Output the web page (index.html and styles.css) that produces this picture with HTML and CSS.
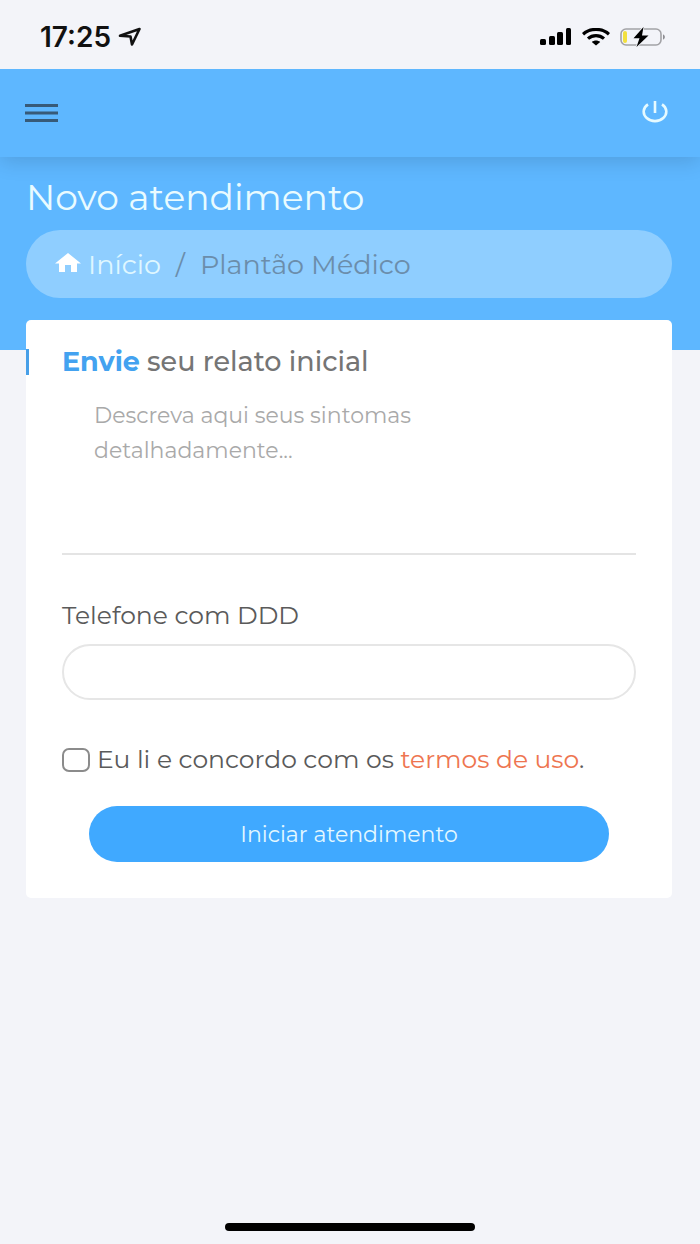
FILE: index.html
```html
<!DOCTYPE html>
<html lang="pt-BR">
<head>
  <meta charset="UTF-8">
  <meta name="viewport" content="width=device-width, initial-scale=1">
  <title>Novo atendimento</title>
  <link rel="stylesheet" href="styles.css">
</head>
<body>
  <div class="status-bar">
    <div class="status-time">
      <span>17:25</span>
      <svg width="24" height="20" viewBox="0 0 24 20" fill="none" stroke="#111" stroke-width="2.6" stroke-linejoin="round">
        <path d="M2 8.8 21.5 2 14 17.5 12.5 9.5Z"/>
      </svg>
    </div>
    <div class="status-icons">
      <svg width="32" height="18" viewBox="0 0 32 18" fill="#000">
        <rect x="0" y="11" width="6" height="6" rx="1.5"/>
        <rect x="9" y="8" width="6" height="9" rx="1.5"/>
        <rect x="17" y="4" width="6" height="13" rx="1.5"/>
        <rect x="26" y="0" width="5" height="17" rx="1.5"/>
      </svg>
      <svg width="28" height="18" viewBox="0 0 28 18" fill="none" stroke="#000" stroke-width="3.2">
        <path d="M1 6.2C8-.2 20-.2 27 6.2"/>
        <path d="M6 10.6C10.5 6.6 17.5 6.6 22 10.6"/>
        <path d="M14 17.5 9.8 14C12 12 16 12 18.2 14Z" fill="#000" stroke="none"/>
      </svg>
      <svg width="46" height="20" viewBox="0 0 46 20">
        <rect x="1" y="2" width="40" height="16" rx="5" fill="none" stroke="#a2a2a6" stroke-width="1.6"/>
        <rect x="3" y="4" width="4" height="12" rx="2" fill="#f3e03f"/>
        <path d="M43 7.5C45.5 8 45.5 12 43 12.5Z" fill="#8e8e93"/>
        <path d="M23.5 0 13.5 11.2H19.5L16.5 20 28.5 8.4H22Z" fill="#000" stroke="#f3f4f9" stroke-width="1.5" paint-order="stroke"/>
      </svg>
    </div>
  </div>

  <header class="navbar">
    <button type="button" class="nav-button" aria-label="Menu">
      <svg width="33" height="20" viewBox="0 0 33 20" stroke="#375a78" stroke-width="3">
        <path d="M0 2.5H33M0 10H33M0 17.5H33"/>
      </svg>
    </button>
    <button type="button" class="nav-button" aria-label="Sair">
      <svg width="26" height="24" viewBox="0 0 26 24" fill="none" stroke="#e6faff" stroke-width="2.6">
        <path d="M6 3.3A11.3 9.4 0 1 0 20 3.3"/>
        <path d="M13 0V12"/>
      </svg>
    </button>
  </header>

  <section class="page-header">
    <h1>Novo atendimento</h1>
    <nav class="breadcrumb" aria-label="Navegação">
      <a href="#">
        <svg width="26" height="22" viewBox="0 0 26 22" fill="#fff">
          <path d="M13 0 26 10.5H22V19H16V12H10V19H4V10.5H0Z"/>
        </svg>
        <span>Início</span>
      </a>
      <span class="separator">/</span>
      <span class="current">Plantão Médico</span>
    </nav>
  </section>

  <main class="card">
    <h2 class="card-title"><label for="relato"><strong>Envie</strong> seu relato inicial</label></h2>
    <form class="card-form">
      <textarea id="relato" name="relato" placeholder="Descreva aqui seus sintomas detalhadamente..."></textarea>

      <label class="phone-label" for="telefone">Telefone com DDD</label>
      <input class="phone" type="tel" id="telefone" name="telefone">

      <div class="terms">
        <input type="checkbox" id="termos" name="termos">
        <label for="termos">Eu li e concordo com os <a href="#">termos de uso</a>.</label>
      </div>

      <button type="submit" class="submit">Iniciar atendimento</button>
    </form>
  </main>

  <div class="home-indicator"></div>
</body>
</html>
```

FILE: styles.css
```css
* {
  box-sizing: border-box;
}

body {
  margin: 0;
  min-height: 100vh;
  display: flex;
  flex-direction: column;
  background-color: #f3f4f9;
  color: #5a5a5a;
  font-family: Montserrat, "DejaVu Sans", Verdana, sans-serif;
  font-size: 25px;
}

h1,
h2 {
  margin: 0;
  font-weight: normal;
}

a {
  text-decoration: none;
}

svg {
  display: block;
}

.status-bar {
  display: flex;
  justify-content: space-between;
  align-items: center;
  height: 69px;
  padding: 4px 34px 0 40px;
}

.status-time {
  display: flex;
  align-items: center;
  gap: 7px;
  color: #111;
  font-family: Inter, sans-serif;
  font-size: 28px;
  font-weight: 600;
}

.status-icons {
  display: flex;
  align-items: center;
  gap: 10px;
}

.navbar {
  position: relative;
  display: flex;
  justify-content: space-between;
  align-items: center;
  height: 88px;
  padding: 0 32px 0 25px;
  background-color: #5eb7ff;
  box-shadow: 0 4px 20px rgba(0, 0, 0, 0.14);
  clip-path: inset(0 0 -32px 0);
}

.nav-button {
  padding: 0;
  border: none;
  background: none;
  cursor: pointer;
}

.page-header {
  padding: 20px 28px 52px 26px;
  background-color: #5eb7ff;
}

.page-header h1 {
  color: #e9fbff;
  font-size: 36px;
  line-height: 40px;
  margin-bottom: 13px;
}

.breadcrumb {
  display: flex;
  align-items: center;
  gap: 15px;
  height: 68px;
  padding: 0 29px;
  border-radius: 34px;
  background-color: #8fceff;
  color: #6b8dab;
  font-size: 27px;
}

.breadcrumb a {
  display: flex;
  align-items: center;
  gap: 7px;
  color: #dff7ff;
}

.card {
  position: relative;
  margin: -30px 28px 0 26px;
  padding: 29px 0 36px;
  border-radius: 5px;
  background-color: #fff;
}

.card-title {
  padding-left: 33px;
  border-left: 3px solid #479fe8;
  color: #757575;
  font-size: 27px;
  font-weight: 500;
  line-height: 26px;
}

.card-title strong {
  color: #43a2f0;
}

.card-form {
  padding: 0 36px;
}

.card-form textarea {
  display: block;
  width: 100%;
  height: 160px;
  margin: 20px 0 45px;
  padding: 3px 32px;
  border: none;
  border-bottom: 2px solid #e4e4e4;
  resize: none;
  font-family: inherit;
  font-size: 22px;
  line-height: 35px;
}

.card-form textarea::placeholder {
  color: #a9a9a9;
}

.phone-label {
  display: block;
  margin-bottom: 13px;
  line-height: 31px;
}

.phone {
  display: block;
  width: 100%;
  height: 56px;
  padding: 0 28px;
  border: 2px solid #e6e6e6;
  border-radius: 28px;
  background-color: #fff;
  font-family: inherit;
  font-size: 25px;
}

.terms {
  display: flex;
  align-items: center;
  gap: 7px;
  margin: 43px 0 30px;
  line-height: 33px;
}

.terms input {
  appearance: none;
  flex: none;
  width: 28px;
  height: 24px;
  margin: 0;
  border: 2px solid #8b8b8b;
  border-radius: 7px;
  background-color: #fff;
}

.terms input:checked {
  background-color: #40a9ff;
}

.terms a {
  color: #ee7550;
}

.submit {
  display: block;
  width: calc(100% - 54px);
  height: 56px;
  margin: 0 auto;
  border: none;
  border-radius: 28px;
  background-color: #40a9ff;
  color: #e4f8ff;
  font-family: inherit;
  font-size: 22px;
  cursor: pointer;
}

.home-indicator {
  width: 250px;
  height: 8px;
  margin: auto auto 13px;
  border-radius: 4px;
  background-color: #000;
}
```
